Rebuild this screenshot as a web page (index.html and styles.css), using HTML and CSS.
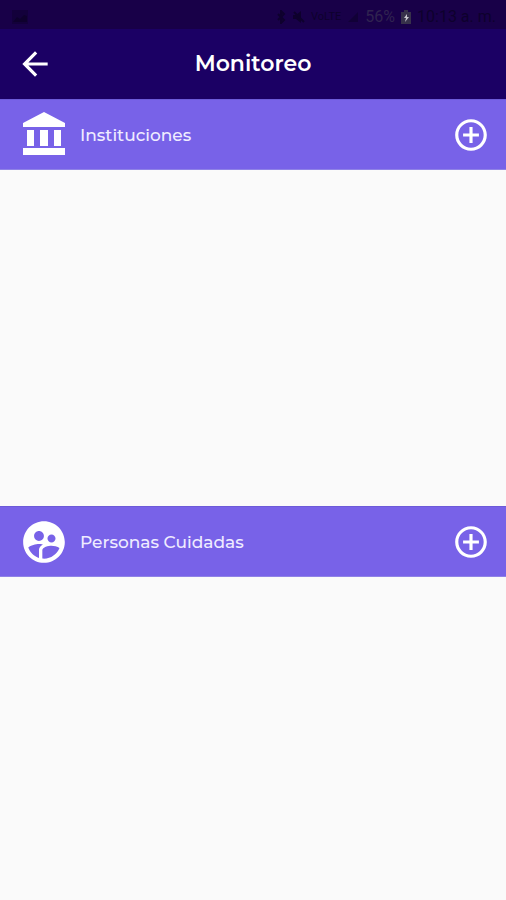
FILE: index.html
```html
<!DOCTYPE html>
<html lang="es">
<head>
    <meta charset="UTF-8">
    <meta name="viewport" content="width=device-width, initial-scale=1.0">
    <title>Monitoreo</title>
    <link rel="stylesheet" href="styles.css">
</head>
<body>
    <div class="status-bar">
        <svg class="status-picture" viewBox="0 0 16 14"><path d="M0 0h16v14H0z" opacity=".5"/><path d="M1 12l4-5 3 2 4-4 3 1v6z"/></svg>
        <div class="status-right">
            <svg class="status-icon" viewBox="0 0 12 14"><path d="M3 4l6 6-3 3V1l3 3-6 6" fill="none" stroke="#0e002d" stroke-width="2"/></svg>
            <svg class="status-icon" viewBox="0 0 12 14"><path d="M0 5h3l5-4v12L3 9H0z"/><path d="M1 2l10 10" stroke="#0e002d" stroke-width="2"/></svg>
            <span class="status-network">VoLTE</span>
            <svg class="status-icon" viewBox="0 0 12 14"><path d="M11 2v10H1z" opacity=".6"/></svg>
            <span class="status-percent">56%</span>
            <svg class="status-battery" viewBox="0 0 10 14"><path d="M3 0h4v2h3v12H0V2h3z" fill="#37314a"/><path d="M6 4L3 8h2l-1 4 4-5H6z" fill="#c9c7cf"/></svg>
            <span class="status-time">10:13 a. m.</span>
        </div>
    </div>
    <header class="header">
        <button class="icon-button" aria-label="Volver">
            <svg viewBox="0 0 24 24"><path d="M20 11H7.83l5.59-5.59L12 4l-8 8 8 8 1.41-1.41L7.83 13H20v-2z"/></svg>
        </button>
        <h1 class="title">Monitoreo</h1>
    </header>
    <main class="content">
        <section class="section">
            <div class="section-bar">
                <svg class="section-icon" viewBox="0 0 50 50"><path d="M25 2l21 11v4H4v-4zM8 20h7v16H8zM21 20h8v16h-8zM35 20h7v16h-7zM4 38h42v7H4z"/></svg>
                <h2 class="section-title">Instituciones</h2>
                <button class="icon-button" aria-label="Agregar institución">
                    <svg viewBox="0 0 24 24"><path d="M13 7h-2v4H7v2h4v4h2v-4h4v-2h-4V7zm-1-5C6.48 2 2 6.48 2 12s4.48 10 10 10 10-4.48 10-10S17.52 2 12 2zm0 18c-4.41 0-8-3.59-8-8s3.59-8 8-8 8 3.59 8 8-3.59 8-8 8z"/></svg>
                </button>
            </div>
            <div class="section-list"></div>
        </section>
        <section class="section">
            <div class="section-bar">
                <svg class="section-icon" viewBox="0 0 24 24"><path d="M11.99 2c-5.52 0-10 4.48-10 10s4.48 10 10 10 10-4.48 10-10-4.48-10-10-10zm3.61 6.34c1.07 0 1.93.86 1.93 1.93 0 1.07-.86 1.93-1.93 1.93-1.07 0-1.93-.86-1.93-1.93-.01-1.07.86-1.93 1.93-1.93zm-6-1.58c1.3 0 2.36 1.06 2.36 2.36 0 1.3-1.06 2.36-2.36 2.36s-2.36-1.06-2.36-2.36c0-1.31 1.05-2.36 2.36-2.36zm0 9.13v3.75c-2.4-.75-4.3-2.6-5.14-4.96 1.05-1.12 3.67-1.69 5.14-1.69.53 0 1.2.08 1.9.22-1.64.87-1.9 2.02-1.9 2.68zM11.99 20c-.27 0-.53-.01-.79-.04v-4.07c0-1.42 2.94-2.13 4.4-2.13 1.07 0 2.92.39 3.84 1.15-1.17 2.97-4.06 5.09-7.45 5.09z"/></svg>
                <h2 class="section-title">Personas Cuidadas</h2>
                <button class="icon-button" aria-label="Agregar persona cuidada">
                    <svg viewBox="0 0 24 24"><path d="M13 7h-2v4H7v2h4v4h2v-4h4v-2h-4V7zm-1-5C6.48 2 2 6.48 2 12s4.48 10 10 10 10-4.48 10-10S17.52 2 12 2zm0 18c-4.41 0-8-3.59-8-8s3.59-8 8-8 8 3.59 8 8-3.59 8-8 8z"/></svg>
                </button>
            </div>
            <div class="section-list"></div>
        </section>
    </main>
</body>
</html>
```
FILE: styles.css
```css
* {
    box-sizing: border-box;
}
body {
    display: flex;
    flex-direction: column;
    min-height: 100vh;
    margin: 0;
    background-color: #fafafa;
    color: #fff;
    font-family: Montserrat, Inter, sans-serif;
}
svg {
    display: block;
    flex: none;
    fill: currentColor;
}
.status-bar {
    display: flex;
    justify-content: space-between;
    align-items: center;
    height: 29px;
    padding: 4px 10px 0 12px;
    background-color: #180048;
    color: #0e002d;
    font-family: Roboto, sans-serif;
    font-size: 16px;
}
.status-right {
    display: flex;
    align-items: center;
    gap: 6px;
}
.status-picture {
    width: 16px;
    height: 14px;
}
.status-icon {
    width: 12px;
    height: 14px;
}
.status-network {
    font-size: 11px;
}
.status-percent {
    color: #302350;
}
.status-battery {
    width: 10px;
    height: 14px;
}
.header {
    display: grid;
    grid-template-columns: 38px 1fr 38px;
    align-items: center;
    height: 70px;
    padding: 0 16px;
    background-color: #1b0064;
}
.title {
    margin: 0;
    font-size: 22px;
    font-weight: 600;
    line-height: 28px;
    text-align: center;
}
.icon-button {
    width: 38px;
    height: 38px;
    padding: 0;
    border: none;
    background: none;
    color: inherit;
    cursor: pointer;
}
.content {
    display: flex;
    flex: 1;
    flex-direction: column;
}
.section-bar {
    display: flex;
    align-items: center;
    height: 71px;
    padding: 0 16px 0 19px;
    border-top: 1px solid #6c5ad8;
    border-bottom: 1px solid #8f82e6;
    background-color: #7862e8;
}
.section-icon {
    width: 50px;
    height: 50px;
}
.section-title {
    flex: 1;
    margin: 0;
    padding-left: 11px;
    color: #efecff;
    font-size: 17px;
    font-weight: 500;
    line-height: 24px;
}
.section-list {
    min-height: 336px;
}
.section:last-child .section-list {
    min-height: 0;
}
```
